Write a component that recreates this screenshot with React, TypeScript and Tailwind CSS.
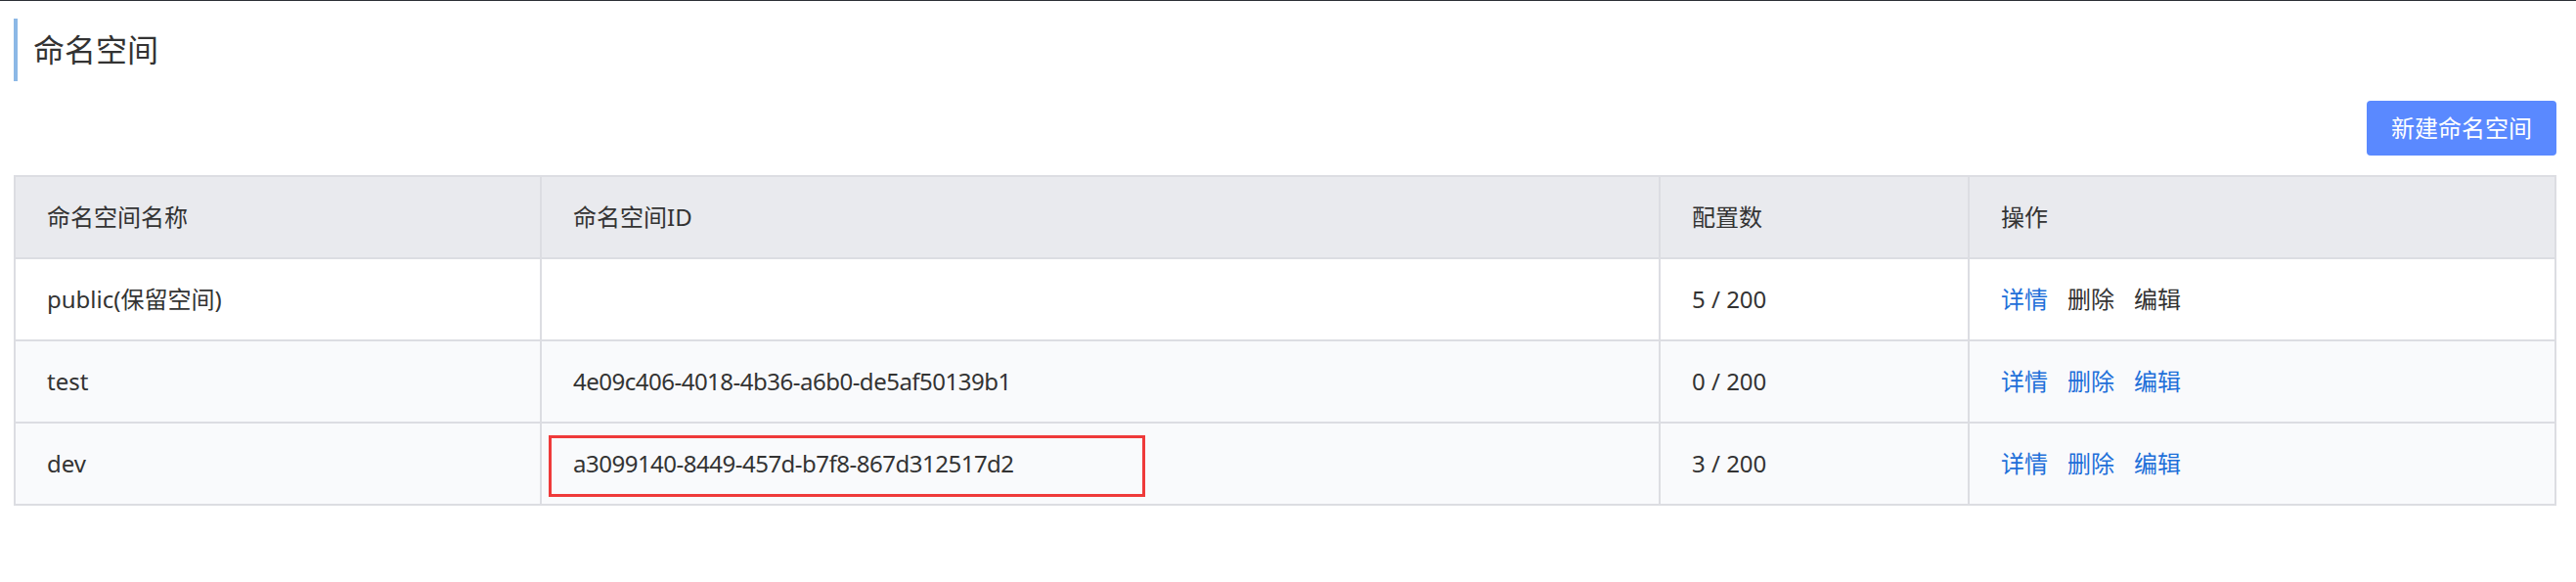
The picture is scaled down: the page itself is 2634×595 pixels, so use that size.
import React from 'react';

type Row = {
  name: string;
  id: string;
  count: string;
  allBlue: boolean;
  marked?: boolean;
};

const ROWS: Row[] = [
  { name: 'public(保留空间)', id: '', count: '5 / 200', allBlue: false },
  { name: 'test', id: '4e09c406-4018-4b36-a6b0-de5af50139b1', count: '0 / 200', allBlue: true },
  { name: 'dev', id: 'a3099140-8449-457d-b7f8-867d312517d2', count: '3 / 200', allBlue: true, marked: true },
];

const font = { fontFamily: '"Noto Sans", "Noto Sans CJK SC", sans-serif' };

const App = () => {
  return (
    <div className="min-h-[595px] w-full bg-white border-t border-[#2b3036] text-[#333]" style={font}>
      <div className="pl-[14px] pr-[20px]">
        <div className="mt-[18px] h-[64px] border-l-4 border-[#8cb8e6] pl-4 flex items-center">
          <h1 className="text-[32px] font-normal leading-none">命名空间</h1>
        </div>
        <div className="flex justify-end mt-[20px]">
          <button className="h-[56px] px-[25px] rounded-[4px] bg-[#5a89ff] text-white text-[24px] leading-none">
            新建命名空间
          </button>
        </div>
        <div className="mt-[20px] border-l-2 border-t-2 border-[#dcdde2] text-[24px]">
          <div className="grid grid-cols-[538px_1144px_316px_1fr] h-[84px] bg-[#e9eaee] border-b-2 border-[#dcdde2]">
            <div className="flex items-center px-8 border-r-2 border-[#dcdde2]">命名空间名称</div>
            <div className="flex items-center px-8 border-r-2 border-[#dcdde2]">命名空间ID</div>
            <div className="flex items-center px-8 border-r-2 border-[#dcdde2]">配置数</div>
            <div className="flex items-center px-8 border-r-2 border-[#dcdde2]">操作</div>
          </div>
          {ROWS.map((row, i) => (
            <div
              key={row.name}
              className={`grid grid-cols-[538px_1144px_316px_1fr] h-[84px] border-b-2 border-[#dcdde2] ${
                i === 0 ? 'bg-white' : 'bg-[#f9fafc]'
              }`}
            >
              <div className="flex items-center px-8 border-r-2 border-[#dcdde2]">{row.name}</div>
              <div className="relative flex items-center px-8 border-r-2 border-[#dcdde2] tracking-[-0.5px]">
                {row.id}
                {row.marked && (
                  <div className="absolute left-[7px] top-[12px] w-[610px] h-[63px] border-[3px] border-[#ef3a3a]" />
                )}
              </div>
              <div className="flex items-center px-8 border-r-2 border-[#dcdde2]">{row.count}</div>
              <div className="flex items-center gap-5 px-8 border-r-2 border-[#dcdde2]">
                <a className="text-[#1e6fd9] cursor-pointer">详情</a>
                <a className={`${row.allBlue ? 'text-[#1e6fd9]' : 'text-[#333]'} cursor-pointer`}>删除</a>
                <a className={`${row.allBlue ? 'text-[#1e6fd9]' : 'text-[#333]'} cursor-pointer`}>编辑</a>
              </div>
            </div>
          ))}
        </div>
      </div>
    </div>
  );
};

export default App;
